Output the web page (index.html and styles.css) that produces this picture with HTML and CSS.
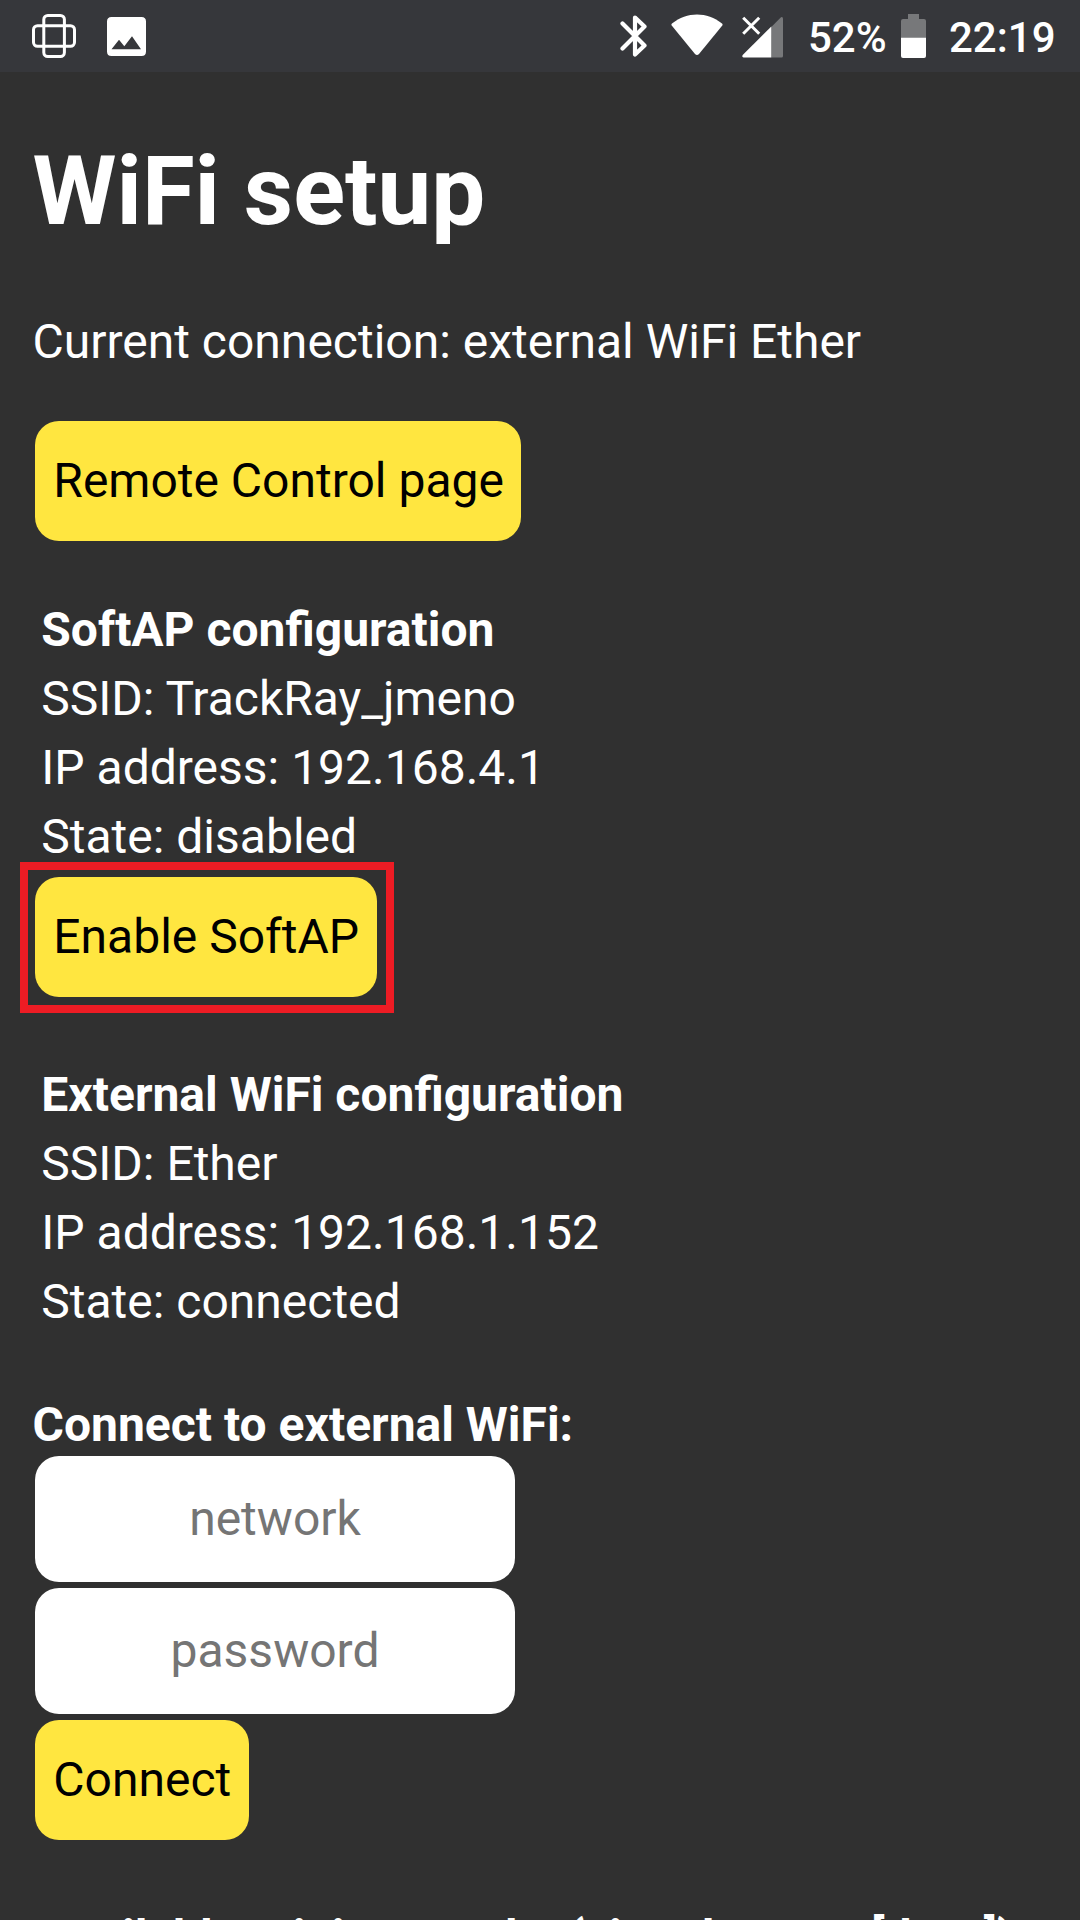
FILE: index.html
```html
<!DOCTYPE html>
<html lang="en">
<head>
<meta charset="utf-8">
<title>WiFi setup</title>
<link rel="stylesheet" href="styles.css">
</head>
<body>
<header class="status-bar">
  <div class="notifications">
    <svg width="44" height="44" viewBox="0 0 44 44" fill="none" stroke="#fff" stroke-width="3">
      <rect x="11.8" y="1.5" width="20.6" height="41" rx="4"/>
      <rect x="1.5" y="11.7" width="41" height="20.6" rx="4"/>
    </svg>
    <svg width="39" height="39" viewBox="0 0 39 39" fill="#fff" fill-rule="evenodd">
      <path d="M4.5 0H34.5Q39 0 39 4.5V34.5Q39 39 34.500 39H4.500Q0 39 0 34.500V4.500Q0 0 4.500 0ZM4.500 32.300H34L25 19.300L17.300 29.300L12 22.800Z"/>
    </svg>
  </div>
  <div class="indicators">
    <svg class="bluetooth" width="28" height="44" viewBox="0 0 28 44" fill="none" stroke="#fff" stroke-width="4.200" stroke-linecap="round" stroke-linejoin="round">
      <path d="M2.500 9.500L24.500 31.500L15 40.500V3.500L24.500 12.500L2.500 34.500"/>
    </svg>
    <svg class="wifi" width="52" height="42" viewBox="0 0 52 42" fill="#fff">
      <path d="M1 9.500C16-2.500 36-2.500 51 9.500Q52 10.500 51.300 11.500L28 40Q26 42 24 40L.7 11.500Q0 10.500 1 9.500Z"/>
    </svg>
    <svg class="signal" width="41" height="42" viewBox="0 0 41 42">
      <path d="M29.300 11L39 1.300Q41 .5 41 3V40Q41 41.500 39.500 41.500H29.300Z" fill="#77787a"/>
      <path d="M29.300 10.500V41.500H1.500Q-.5 41 .7 39Z" fill="#fff"/>
      <path d="M1.200 1.800L17.200 17.800M17.200 1.800L1.200 17.800" stroke="#fff" stroke-width="3"/>
    </svg>
    <span class="percent">52%</span>
    <svg class="battery" width="25" height="44" viewBox="0 0 25 44">
      <path d="M7 0H18V5H23Q25 5 25 7V24H0V7Q0 5 2 5H7Z" fill="#77787a"/>
      <path d="M0 23.700H25V42Q25 44 23 44H2Q0 44 0 42Z" fill="#fff"/>
    </svg>
    <span class="clock">22:19</span>
  </div>
</header>
<main class="page">
  <h1 class="title">WiFi setup</h1>
  <p class="current">Current connection: external WiFi Ether</p>
  <button class="button remote">Remote Control page</button>

  <section class="config">
    <h2 class="row heading">SoftAP configuration</h2>
    <p class="row">SSID: TrackRay_jmeno</p>
    <p class="row">IP address: 192.168.4.1</p>
    <p class="row">State: disabled</p>
  </section>
  <div class="highlight"><button class="button">Enable SoftAP</button></div>

  <section class="config external">
    <h2 class="row heading">External WiFi configuration</h2>
    <p class="row">SSID: Ether</p>
    <p class="row">IP address: 192.168.1.152</p>
    <p class="row">State: connected</p>
  </section>

  <form class="connect">
    <h2 class="label">Connect to external WiFi:</h2>
    <input class="field" type="text" placeholder="network">
    <input class="field" type="password" placeholder="password">
    <button class="button" type="button">Connect</button>
  </form>
  <h2 class="label available">Available WiFi networks (signal power [dBm])</h2>
</main>
</body>
</html>
```
FILE: styles.css
```css
* {
  box-sizing: border-box;
}

body {
  margin: 0;
  height: 1920px;
  overflow: hidden;
  background: #303030;
  color: #fff;
  font: 48px/56px Roboto, sans-serif;
}

h1, h2, p {
  margin: 0;
}

.status-bar {
  display: flex;
  justify-content: space-between;
  height: 72px;
  padding: 0 25px 0 32px;
  background: #36373b;
  font-size: 42px;
  font-weight: 500;
}

.notifications, .indicators {
  display: flex;
  align-items: center;
}

.notifications {
  gap: 31px;
}

.bluetooth { margin-right: 23px; }
.wifi { margin: 0 19px 2px 0; }
.signal { margin: 2px 25px 0 0; }

.percent {
  width: 93px;
  padding-top: 3px;
}

.clock {
  width: 106px;
  margin-left: 23px;
  padding-top: 3px;
}

.page {
  display: flex;
  flex-direction: column;
  align-items: flex-start;
  padding: 63px 32.5px 0;
}

.title {
  font-size: 96px;
  font-weight: 700;
  line-height: 112px;
}

.current {
  margin-top: 67px;
}

.button {
  height: 120px;
  margin: 0 2.5px;
  padding: 0 17.5px 0 18.3px;
  border: 0;
  border-radius: 24px;
  background: #ffe640;
  color: #000;
  font: inherit;
}

.remote {
  margin-top: 51px;
}

.config {
  margin: 54px 0 0 8.8px;
}

.row {
  font-size: 48px;
  font-weight: 400;
  line-height: 69px;
}

.heading {
  font-weight: 700;
}

.highlight {
  display: flex;
  margin: -9px 0 0 -12.5px;
  padding: 7px 6.5px 8px 4.5px;
  border: 8px solid #ed1c24;
}

.external {
  margin-top: 47px;
}

.connect {
  display: flex;
  flex-direction: column;
  align-items: flex-start;
  gap: 6px;
  margin-top: 61px;
}

.label {
  font-size: 48px;
  font-weight: 700;
  white-space: nowrap;
}

.connect .label {
  margin-bottom: -3px;
}

.field {
  width: 480px;
  height: 126px;
  margin: 0 2.5px;
  padding: 0 18px 2px;
  border: 0;
  border-radius: 24px;
  background: #fff;
  font: inherit;
  text-align: center;
}

.field::placeholder {
  color: #757575;
}

.available {
  margin: 70px 0 0 8.8px;
}
```
